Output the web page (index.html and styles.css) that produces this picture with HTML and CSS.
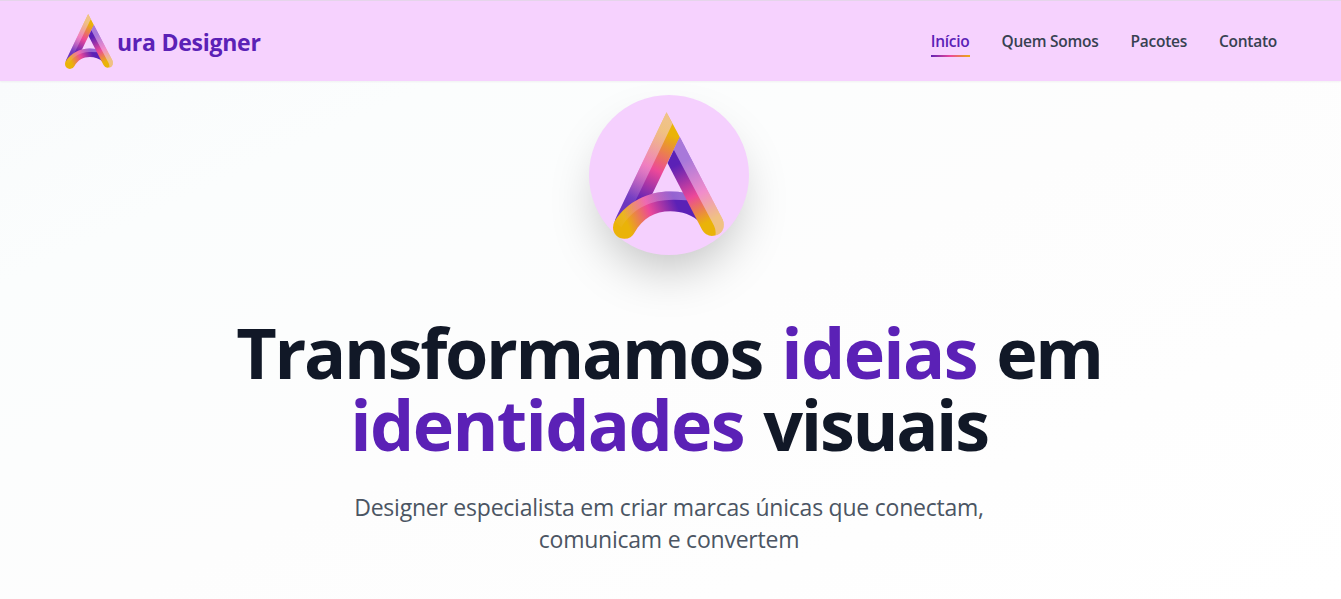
FILE: index.html
```html
<!DOCTYPE html>
<html lang="pt-BR">
<head>
<meta charset="utf-8">
<title>Aura Designer</title>
<link rel="stylesheet" href="styles.css">
</head>
<body>
<svg class="defs" width="0" height="0" aria-hidden="true">
  <defs>
    <linearGradient id="leg-left" gradientUnits="userSpaceOnUse" x1="225" y1="85" x2="105" y2="320">
      <stop offset="0.08" stop-color="#eab308"/><stop offset="0.52" stop-color="#ec4899"/><stop offset="0.92" stop-color="#5b21b6"/>
    </linearGradient>
    <linearGradient id="leg-right" gradientUnits="userSpaceOnUse" x1="210" y1="165" x2="318" y2="385">
      <stop offset="0.14" stop-color="#5b21b6"/><stop offset="0.58" stop-color="#ec4899"/><stop offset="0.94" stop-color="#eab308"/>
    </linearGradient>
    <linearGradient id="arch" gradientUnits="userSpaceOnUse" x1="75" y1="378" x2="240" y2="310">
      <stop offset="0.05" stop-color="#eab308"/><stop offset="0.48" stop-color="#ec4899"/><stop offset="0.95" stop-color="#5b21b6"/>
    </linearGradient>
    <linearGradient id="shine-left" gradientUnits="userSpaceOnUse" x1="200" y1="60" x2="80" y2="310">
      <stop offset="0" stop-color="#f5d0fe" stop-opacity=".52"/><stop offset=".6" stop-color="#f5d0fe" stop-opacity=".38"/><stop offset="1" stop-color="#f5d0fe" stop-opacity=".12"/>
    </linearGradient>
    <linearGradient id="shine-arch" gradientUnits="userSpaceOnUse" x1="55" y1="370" x2="240" y2="285">
      <stop offset="0" stop-color="#f5d0fe" stop-opacity=".04"/><stop offset=".35" stop-color="#f5d0fe" stop-opacity=".2"/><stop offset="1" stop-color="#f5d0fe" stop-opacity=".4"/>
    </linearGradient>
    <symbol id="mark" viewBox="39 35 334 381">
      <path fill="url(#leg-left)" d="M200 35L240 110L158 280L120 340L44 366Q44 360 50 348Z"/>
      <path fill="url(#shine-left)" d="M200 35L218 70L105 305L46 360L50 348Z"/>
      <path fill="url(#arch)" d="M44 363C82 304 145 274 210 274Q235 274 258 278L305 370C278 343 246 333 212 333C165 333 128 354 104 397A34 34 0 0 1 73 416A34 34 0 0 1 39 382Q39 371 44 363Z"/>
      <path fill="url(#shine-arch)" d="M44 363C82 304 145 274 210 274Q235 274 258 278L270 301Q235 298 206 299C145 301 95 330 64 381Q53 373 44 363Z"/>
      <path fill="url(#leg-right)" d="M240 110L369 358C379 383 366 404 342 407C326 409 314 401 307 389L203 188Z"/>
      <path fill="#f5d0fe" fill-opacity=".5" d="M240 110L369 358C379 381 369 401 347 406Q350 392 343 377L222 148Z"/>
    </symbol>
  </defs>
</svg>
<header class="header">
  <a class="brand"><svg class="brand-mark"><use href="#mark"/></svg><span class="brand-name">ura Designer</span></a>
  <nav class="nav">
    <a class="link active">Início</a>
    <a class="link">Quem Somos</a>
    <a class="link">Pacotes</a>
    <a class="link">Contato</a>
  </nav>
</header>
<main class="hero">
  <div class="badge"><svg class="badge-mark"><use href="#mark"/></svg></div>
  <h1 class="title">Transformamos <span class="accent">ideias</span> em<br><span class="accent">identidades</span> visuais</h1>
  <p class="lead">Designer especialista em criar marcas únicas que conectam,<br>comunicam e convertem</p>
</main>
</body>
</html>
```
FILE: styles.css
```css
* { box-sizing: border-box; }
body { margin: 0; height: 599px; overflow: hidden; display: flex; flex-direction: column; font-family: "Segoe UI", "Open Sans", "Noto Sans", sans-serif; background: #fff; }
.defs { position: absolute; }
.header { position: relative; flex: none; height: 81px; padding: 0 64px 0 65px; display: flex; align-items: center; justify-content: space-between; background: #f6d2fe; border-top: 1px solid #e5d5ea; box-shadow: 0 1px 2px rgba(0,0,0,.05); }
.brand { display: flex; align-items: center; gap: 4px; }
.brand-mark { width: 48px; height: 55px; }
.brand-name { font-size: 23px; line-height: 32px; font-weight: 700; letter-spacing: -.25px; color: #5b21b6; padding-top: 2px; }
.nav { display: flex; gap: 32px; }
.link { font-size: 15.5px; line-height: 24px; font-weight: 600; letter-spacing: -.26px; color: #374151; padding: 3px 0 2px; border-bottom: 2px solid transparent; }
.active { color: #5b21b6; border-image: linear-gradient(90deg, #5b21b6, #ec4899, #eab308) 1; }
.hero { flex: 1; padding-top: 14px; display: flex; flex-direction: column; align-items: center; text-align: center; background: linear-gradient(155deg, #f9fbfc 0%, #fbfdfd 18%, #fdfdfd 50%, #fff 100%); }
.badge { flex: none; width: 160px; height: 160px; margin-right: 3px; padding: 17px 0 0 24px; border-radius: 50%; background: #f5d0fe; box-shadow: 0 25px 50px -12px rgba(0,0,0,.25); text-align: left; }
.badge-mark { display: block; width: 111px; height: 127px; }
.title { margin: 61px 3px 0 0; font-size: 70px; line-height: 72px; font-weight: 700; letter-spacing: -2.3px; word-spacing: 3.5px; color: #111827; white-space: nowrap; }
.accent { color: #5b21b6; letter-spacing: -1.65px; }
.lead { margin: 31px 3px 0 0; font-size: 23px; line-height: 32px; letter-spacing: -.23px; color: #4b5563; white-space: nowrap; }
```
